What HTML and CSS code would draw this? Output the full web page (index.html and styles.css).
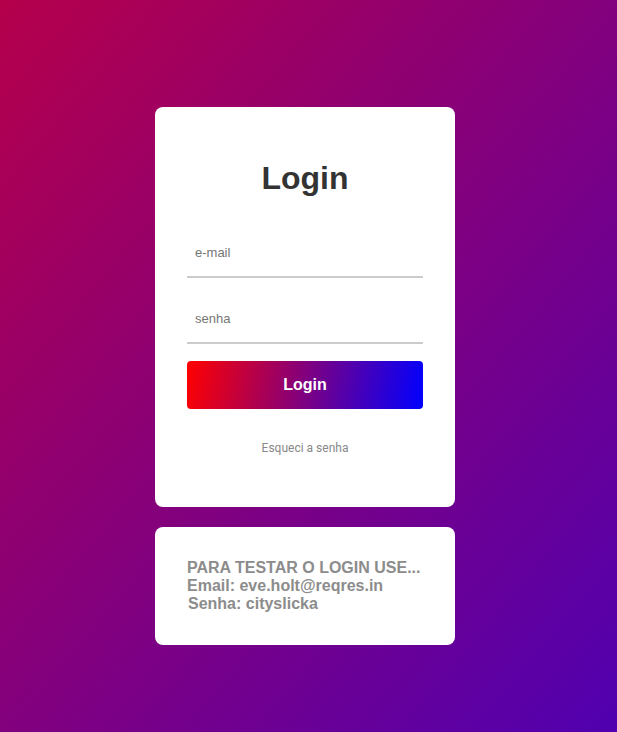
FILE: index.html
```html
<!DOCTYPE html>
<html lang="pt">
<head>
<meta charset="utf-8">
<title>Login</title>
<link rel="stylesheet" href="styles.css">
</head>
<body>
<main class="page">
  <form class="card login-card">
    <h1 class="title">Login</h1>
    <input class="field" type="email" placeholder="e-mail">
    <input class="field" type="password" placeholder="senha">
    <button class="btn" type="button">Login</button>
    <a class="forgot" href="#">Esqueci a senha</a>
  </form>
  <section class="card info-card">
    <p class="info">PARA TESTAR O LOGIN USE...<br>Email: eve.holt@reqres.in<br><span class="indent">Senha: cityslicka</span></p>
  </section>
</main>
</body>
</html>
```
FILE: styles.css
```css
* { box-sizing: border-box; }
html, body { margin: 0; height: 100%; }
body {
  background: linear-gradient(to bottom right, #b5004b, #5000b0);
  font-family: "Liberation Sans", Arial, sans-serif;
  overflow: hidden;
}
.page {
  display: flex;
  flex-direction: column;
  align-items: center;
  gap: 20px;
  padding-top: 107px;
  padding-right: 7px;
}
.card {
  width: 300px;
  background: #fff;
  border-radius: 8px;
}
.login-card {
  display: flex;
  flex-direction: column;
  padding: 53px 32px 52px;
  height: 400px;
}
.title {
  margin: 0 0 33px;
  font-size: 32px;
  line-height: 37px;
  font-weight: bold;
  color: #333;
  text-align: center;
}
.field {
  height: 48px;
  border: none;
  border-bottom: 2px solid #ccc;
  padding: 0 8px 1px;
  margin-bottom: 18px;
  font-family: "Liberation Sans", Arial, sans-serif;
  font-size: 13px;
  color: #333;
  outline: none;
}
.field::placeholder { color: #757575; }
.btn {
  height: 48px;
  margin-top: -1px;
  border: none;
  border-radius: 4px;
  background: linear-gradient(100deg, #ff0000, #0000ff);
  color: #fff;
  font-family: "Liberation Sans", Arial, sans-serif;
  font-weight: bold;
  font-size: 16px;
  padding-bottom: 2px;
}
.forgot {
  margin-top: 32px;
  line-height: 14px;
  font-family: Roboto, "Liberation Sans", sans-serif;
  font-size: 12px;
  color: #888;
  text-align: center;
  text-decoration: none;
}
.info-card {
  padding: 32px;
  height: 118px;
}
.info {
  margin: 0;
  font-weight: bold;
  font-size: 16px;
  line-height: 18px;
  color: #8c8c8c;
}
.indent { padding-left: 1px; }
```
